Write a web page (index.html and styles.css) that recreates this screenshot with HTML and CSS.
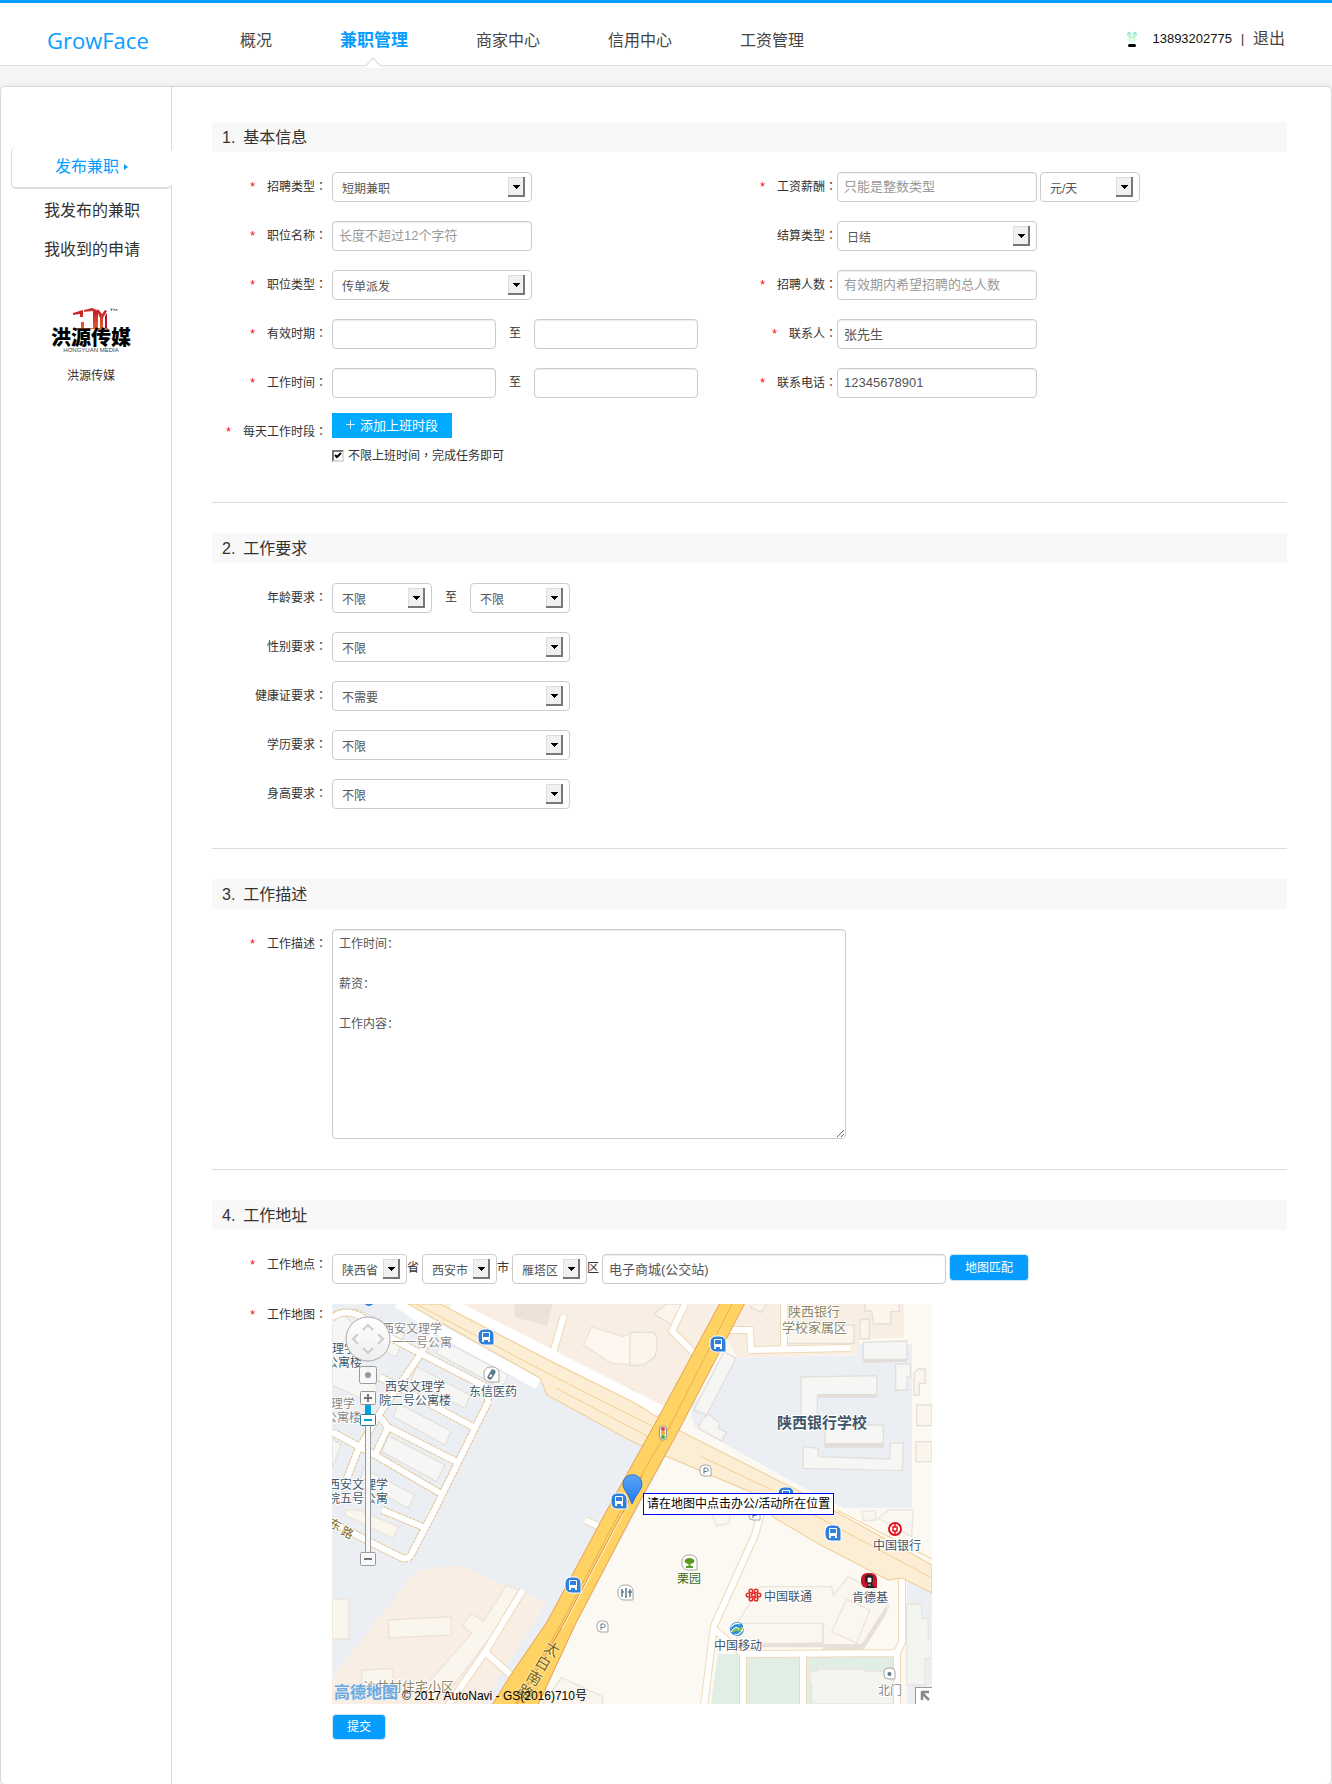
FILE: index.html
```html
<!DOCTYPE html>
<html lang="zh-CN">
<head>
<meta charset="utf-8">
<title>GrowFace</title>
<link rel="stylesheet" href="styles.css">
</head>
<body>
<header class="topbar">
  <a class="brand" href="#">GrowFace</a>
  <nav class="nav">
    <a href="#">概况</a>
    <a href="#" class="is-active">兼职管理<svg class="nav-tip" width="18" height="11" viewBox="0 0 18 11" aria-hidden="true"><path d="M0 11L9 1l9 10z" fill="#fff"/><path d="M2 8.500L9 .8l7 7.700" fill="none" stroke="#ddd" stroke-width="1.200"/></svg></a>
    <a href="#">商家中心</a>
    <a href="#">信用中心</a>
    <a href="#">工资管理</a>
  </nav>
  <div class="account">
    <svg class="avatar" width="12" height="17" viewBox="0 0 12 17" aria-hidden="true"><ellipse cx="6" cy="7" rx="4.500" ry="4.500" fill="#dffbe6"/><path d="M2 5Q1 1 3 1q2 1 1 3M10 5q1-4-1-4-2 1-1 3" fill="#bff5e4" stroke="#7fe0cf"/><path d="M4 5.500v1M8 5.500v1" stroke="#3a6"/><rect x="2" y="13" width="8" height="3" rx="1.500"/></svg>
    <span class="phone">13893202775</span><span class="bar">|</span><a href="#">退出</a>
  </div>
</header>

<div class="panel">
  <aside class="side">
    <a class="side-link is-active" href="#">发布兼职<svg width="4" height="6" viewBox="0 0 4 6" aria-hidden="true"><path d="M0 0l4 3-4 3z" fill="#069dff"/></svg></a>
    <a class="side-link" href="#">我发布的兼职</a>
    <a class="side-link" href="#">我收到的申请</a>
    <div class="company">
      <svg width="94" height="46" viewBox="0 0 94 46" role="img" aria-label="洪源传媒">
        <defs><linearGradient id="red" x1="0" y1="0" x2="0" y2="1"><stop offset="0" stop-color="#c21a2a"/><stop offset="1" stop-color="#e8632a"/></linearGradient></defs>
        <path d="M29 6l10-3v7h-3V7l-7 1zM37 15h3v7h-3z" fill="url(#red)"/>
        <path d="M40 3l8-2 5 2v4l-4-3-9 1z" fill="url(#red)"/>
        <path d="M49 4h5v18h-5z" fill="url(#red)"/>
        <path d="M54 2l4 5 3-4 2 1-4 7v11h-3V11l-3-7z" fill="url(#red)"/>
        <path d="M61 9l2-3v16h-2z" fill="#b41428"/>
        <path d="M30 21h34v1H30z" fill="#e8632a"/>
        <path d="M66 2h3M67.500 2v2M70 4V2l1.500 1L73 2v2" stroke="#333" stroke-width=".6" fill="none"/>
        <text x="47" y="38" class="logo-cn">洪源传媒</text>
        <text x="47" y="45" class="logo-en">HONGYUAN MEDIA</text>
      </svg>
      <span>洪源传媒</span>
    </div>
  </aside>

  <form class="content">
    <section class="section">
      <h2><span>1.</span>基本信息</h2>
      <div class="columns">
        <div class="rows">
          <div class="field"><label for="kind"><i>*</i>招聘类型<span lang="zh-TW">：</span></label><select id="kind" class="w-200"><option>短期兼职</option></select></div>
          <div class="field"><label for="title"><i>*</i>职位名称<span lang="zh-TW">：</span></label><input id="title" class="w-200" type="text" placeholder="长度不超过12个字符"></div>
          <div class="field"><label for="jobtype"><i>*</i>职位类型<span lang="zh-TW">：</span></label><select id="jobtype" class="w-200"><option>传单派发</option></select></div>
          <div class="field"><label for="valid1"><i>*</i>有效时期<span lang="zh-TW">：</span></label><input id="valid1" class="w-date" type="text"><span class="to">至</span><input class="w-date" type="text" aria-label="有效时期结束"></div>
          <div class="field"><label for="work1"><i>*</i>工作时间<span lang="zh-TW">：</span></label><input id="work1" class="w-date" type="text"><span class="to">至</span><input class="w-date" type="text" aria-label="工作时间结束"></div>
        </div>
        <div class="rows rows-right">
          <div class="field"><label for="pay"><i>*</i>工资薪酬<span lang="zh-TW">：</span></label><input id="pay" class="w-200" type="text" placeholder="只能是整数类型"><select class="w-100 unit" aria-label="单位"><option>元/天</option></select></div>
          <div class="field"><label for="settle">结算类型<span lang="zh-TW">：</span></label><select id="settle" class="w-200"><option>日结</option></select></div>
          <div class="field"><label for="count"><i>*</i>招聘人数<span lang="zh-TW">：</span></label><input id="count" class="w-200" type="text" placeholder="有效期内希望招聘的总人数"></div>
          <div class="field"><label for="contact"><i>*</i>联系人<span lang="zh-TW">：</span></label><input id="contact" class="w-200" type="text" value="张先生"></div>
          <div class="field"><label for="tel"><i>*</i>联系电话<span lang="zh-TW">：</span></label><input id="tel" class="w-200" type="text" value="12345678901"></div>
        </div>
      </div>
      <div class="field field-slots">
        <label for="addslot"><i>*</i>每天工作时段<span lang="zh-TW">：</span></label>
        <div class="slots">
          <button type="button" id="addslot" class="btn-add"><svg width="11" height="11" viewBox="0 0 11 11" aria-hidden="true"><path d="M5.500 0v11M0 5.500h11" stroke="#fff"/></svg>添加上班时段</button>
          <label class="check"><input type="checkbox" checked><span>不限上班时间<span lang="zh-TW">，</span>完成任务即可</span></label>
        </div>
      </div>
    </section>

    <section class="section">
      <h2><span>2.</span>工作要求</h2>
      <div class="rows">
        <div class="field"><label for="age1">年龄要求<span lang="zh-TW">：</span></label><select id="age1" class="w-100"><option>不限</option></select><span class="to">至</span><select class="w-100" aria-label="年龄上限"><option>不限</option></select></div>
        <div class="field"><label for="sex">性别要求<span lang="zh-TW">：</span></label><select id="sex" class="w-238"><option>不限</option></select></div>
        <div class="field"><label for="health">健康证要求<span lang="zh-TW">：</span></label><select id="health" class="w-238"><option>不需要</option></select></div>
        <div class="field"><label for="edu">学历要求<span lang="zh-TW">：</span></label><select id="edu" class="w-238"><option>不限</option></select></div>
        <div class="field"><label for="height">身高要求<span lang="zh-TW">：</span></label><select id="height" class="w-238"><option>不限</option></select></div>
      </div>
    </section>

    <section class="section section-desc">
      <h2><span>3.</span>工作描述</h2>
      <div class="field"><label for="desc"><i>*</i>工作描述<span lang="zh-TW">：</span></label><textarea id="desc">工作时间：

薪资：

工作内容：</textarea></div>
    </section>

    <section class="section section-place">
      <h2><span>4.</span>工作地址</h2>
      <div class="rows">
        <div class="field"><label for="prov"><i>*</i>工作地点<span lang="zh-TW">：</span></label>
          <div class="place">
            <select id="prov" class="w-75"><option>陕西省</option></select><span>省</span>
            <select class="w-75" aria-label="市"><option>西安市</option></select><span>市</span>
            <select class="w-75" aria-label="区"><option>雁塔区</option></select><span>区</span>
            <input type="text" class="w-addr" aria-label="详细地址" value="电子商城(公交站)">
            <button type="button" class="btn btn-match">地图匹配</button>
          </div>
        </div>
        <div class="field"><label for="map"><i>*</i>工作地图<span lang="zh-TW">：</span></label>
          <div class="map" id="map">
            <svg class="map-art" viewBox="0 0 600 400" aria-label="地图">
              <defs>
                <linearGradient id="pin" x1="0" y1="0" x2="0" y2="1"><stop offset="0" stop-color="#5da4f8"/><stop offset="1" stop-color="#1f7cf0"/></linearGradient>
                <linearGradient id="disc" x1="0" y1="0" x2="0" y2="1"><stop offset="0" stop-color="#fff"/><stop offset="1" stop-color="#eee"/></linearGradient>
                <g id="bus"><path d="M0 6a6 6 0 0 1 6-6h4a6 6 0 0 1 6 6v10H6a6 6 0 0 1-6-6z" fill="#2f7fdb" stroke="#fff"/><rect x="4" y="3" width="8" height="8" rx="1" fill="#fff"/><rect x="5" y="4" width="6" height="4" fill="#2f7fdb"/><path d="M4 12h2M10 12h2" stroke="#fff" stroke-width="2"/></g>
                <g id="park"><path d="M0 4a4 4 0 0 1 4-4h3a4 4 0 0 1 4 4v7H4a4 4 0 0 1-4-4z" fill="#fff" stroke="#aaa7a2"/><path d="M4 9V3h2.500a1.500 1.500 0 0 1 0 3.500H4" fill="none" stroke="#5b7a8c"/></g>
                <path id="poi" d="M0 6a6 6 0 0 1 6-6h3a6 6 0 0 1 6 6v9H6a6 6 0 0 1-6-6z" fill="#fff" stroke="#aaa7a2"/>
              </defs>
              <rect width="600" height="400" fill="#ebeff4"/>
              <!-- east side ground -->
              <path d="M400 0H600V400H206L243 321 330 160 360 90z" fill="#fcf9f2"/>
              <path d="M80 0H395L325 120 215 60 108 0z" fill="#f8eee3"/>
              <path d="M412 0H572V34H527V50L405 54 395 34z" fill="#f8eee3"/>
              <path d="M405 54L526 51V40H580V204H511L461 178 364 124Q356 110 362 98z" fill="#ebeff4"/>
              <path d="M0 373L83 268Q106 261 130 262L173 281 215 298 150 400H0z" fill="#f8eee3"/>
              <path d="M575 270L600 285V400H575z" fill="#ebeff4"/>
              <path d="M386 350H565V400H379z" fill="#e1eee4"/>

              <!-- housing blocks -->
              <g transform="translate(-7 -9) scale(.3333)" fill="#f6f7f4" stroke="#e4e1dd" stroke-width="4">
                <path d="M350 135L550 240 530 280 335 175zM275 215L435 300 420 340 258 255zM220 325L378 408 360 450 205 365zM190 422L360 510 335 560 170 470zM115 520L270 600 250 640 105 560zM90 40L240 110 215 185 150 160zM21 60L60 60 95 100 70 165 21 140zM21 195L100 200 160 280 130 320 21 270zM21 430L48 450 21 520z"/>
                <g fill="#fdf7ef" stroke="#ece2d8"><path d="M570 27H680L665 90 570 65z" fill="#ece2da"/><path d="M800 95L895 125 930 110V210L860 205 775 150z"/></g>
              </g>
              <g transform="translate(298 -9) scale(.3333)" fill="#f6f7f4" stroke="#e4dfda" stroke-width="4">
                <path d="M282 170L318 190 230 360 192 345zM235 357L270 385 265 400 290 412 275 438 205 400 215 375z"/>
                <path d="M513 246L740 242V306H562V366H513zM585 390H760V455H585zM520 455L565 460V485L780 492V445L820 443 817 527 520 520z"/>
                <path d="M562 297H738V307H562zM585 444H760V458H585zM700 192L831 188V200L700 204z" fill="#e2ddd9" stroke="none"/>
                <path d="M700 142L831 138V193L700 193zM797 207H841V245H831V285H797z"/>
                <g fill="#fcf5ec"><path d="M110 27L72 57 130 92 160 27zM360 35L395 52 410 27M705 27V48H725L730 87H782V50H808V27M690 75L718 72V132H690zM472 90H672V145H472zM852 235L865 222H886V265H868V300H852zM860 330H906V392H860zM858 440H906V500H858zM0 112H70Q90 130 75 185L40 210 0 212z"/></g>
              </g>
              <g transform="translate(-7 206) scale(.3333)" fill="#faf6ee" stroke="#ece3da" stroke-width="4">
                <path d="M190 330L378 320V375L192 384zM545 225L580 240 520 350 390 520 320 575 290 540 440 370 412 345 440 310 475 335zM110 480L205 476V520H110zM60 0L100 0 220 50 205 85 60 15zM21 265L72 270V387H21zM710 503L833 560V600H640z"/>
              </g>
              <g transform="translate(298 206) scale(.3333)" fill="#fbf6ef" stroke="#ece4de" stroke-width="4">
                <path d="M325 335L390 230H605L610 255 655 200 770 260 775 290 700 418 580 420V340H325zM320 340H578V400H320z"/>
                <path d="M318 405L578 397V412H330zM583 402H695L770 285V310L700 420H583z" fill="#e8dfda" stroke="none"/>
                <path d="M650 268L720 300 680 400 605 365zM697 5L735 2 740 30 700 32zM775 0H850L845 80 745 25zM240 0H300L298 40 260 48z"/>
                <path d="M545 485H560V478H705V485H790V582H545V520H540V490zM830 282H875V325H895V385H906V445H885V525H830z" fill="#f3f5f1"/>
              </g>

              <!-- estate lanes: dashed edge, white bed -->
              <g fill="none" stroke-linejoin="round">
                <path stroke="#e3c18c" stroke-width="8" stroke-dasharray="3 1" d="M103 24L88 51 48 109 26 146 12 182M55 32L88 49 156 84V98L100 211 80 249 Q77 256 70 254L40 239 0 218M48 73L141 123M46 111L56 123 125 158M0 128L43 151 108 189M56 123L43 151M50 206L91 223M0 14Q12 4 28 12L60 34"/>
                <path stroke="#fff" stroke-width="6" d="M103 24L88 51 48 109 26 146 12 182M55 32L88 49 156 84V98L100 211 80 249 Q77 256 70 254L40 239 0 218M48 73L141 123M46 111L56 123 125 158M0 128L43 151 108 189M56 123L43 151M50 206L91 223M0 14Q12 4 28 12L60 34"/>
                <path stroke="#efd9b8" stroke-width="8" d="M191 286L153 348 116 402M153 348L181 373M232 11L219 56M353 0L340 27 363 50M395 26H418L419 46 518 44M452 0V44M430 205L423 231 382 322 372 402M382 325L411 350 565 349 570 338V274M411 350V402M471 350V402M565 345V402M253 216L266 222M296 87L311 98 325 116"/>
                <path stroke="#fff" stroke-width="6" d="M191 286L153 348 116 402M153 348L181 373M232 11L219 56M353 0L340 27 363 50M395 26H418L419 46 518 44M452 0V44M430 205L423 231 382 322 372 402M382 325L411 350 565 349 570 338V274M411 350V402M471 350V402M565 345V402M253 216L266 222M296 87L311 98 325 116"/>
              </g>

              <!-- avenue running north-west to south-east -->
              <path d="M120 0L220 51 330 107" fill="none" stroke="#fff" stroke-width="10"/>
              <path d="M66 -2L100 22 206 80" fill="none" stroke="#fff" stroke-width="11"/>
              <path d="M76 0H108L220 58 303 99 346 126 461 184 501 206 600 261V289L570 274 556 276 485 239 441 213 421 189 303 139 215 91 208 74z" fill="#fbeed4" stroke="#f0c98c"/>
              <path d="M84 0L215 69 320 122M224 84L330 140M368 152L440 186M480 210L600 274M505 206L600 255" fill="none" stroke="#f4cf8e"/>
              <!-- main road -->
              <path d="M388 -1H413L348 124 303 206 243 321 206 401H160L180 369 215 318 275 206 325 116z" fill="#ffd264" stroke="#e5a052"/>
              <path d="M400 0L338 122 289 206 229 320 183 400" fill="none" stroke="#e8b04e"/>
              <path d="M310 172L291 208 231 321 185 400" fill="none" stroke="#d98c48"/>
              <path d="M291 210L230 325" fill="none" stroke="#fff3da"/>

              <!-- points of interest -->
              <use href="#bus" x="146" y="25"/><use href="#bus" x="378" y="32"/><use href="#bus" x="446" y="183"/><use href="#bus" x="493" y="221"/><use href="#bus" x="279" y="189"/><use href="#bus" x="233" y="273"/>
              <circle cx="37" cy="-3" r="5" fill="#2f7fdb"/>
              <use href="#park" x="368" y="161"/><use href="#park" x="417" y="205"/><use href="#park" x="265" y="317"/>
              <use href="#poi" x="152" y="63"/><path d="M158 73l3-5" stroke="#5b7a8c" stroke-width="5" stroke-linecap="round"/><path d="M158 73l1.500-2.500" stroke="#fff" stroke-width="2"/>
              <use href="#poi" x="286" y="281"/><path d="M290 285v8M294 284v10M298 285v8M289 288h3M296 288h4" stroke="#5b7a8c" stroke-width="1.500"/>
              <use href="#poi" x="350" y="251"/><path d="M357.500 255v8M354 263h7" stroke="#5a9a20" stroke-width="2"/><ellipse cx="357.500" cy="257" rx="5" ry="3" fill="#5a9a20"/>
              <path d="M552 368a4 4 0 0 1 4-4h3a4 4 0 0 1 4 4v7h-7a4 4 0 0 1-4-4z" fill="#fff" stroke="#aaa7a2"/><circle cx="557.500" cy="370" r="2" fill="#5b7a8c"/>
              <rect x="327.500" y="122" width="7" height="14" rx="3" fill="#eee" stroke="#999"/><circle cx="331" cy="125" r="2" fill="#e8403a"/><circle cx="331" cy="129" r="2" fill="#f5a623"/><circle cx="331" cy="133" r="2" fill="#4caf28"/>
              <g fill="#fff" stroke="#e0101e" stroke-width="2"><circle cx="563" cy="225" r="6"/><rect x="561" y="223" width="4" height="4" stroke-width="1.500"/><path d="M563 219v4M563 227v4" stroke-width="1.500"/></g>
              <path d="M529 275a6 6 0 0 1 6-6h4a6 6 0 0 1 6 6v9h-10a6 6 0 0 1-6-6z" fill="#c8142c"/><path d="M533 272q4-3 8 0v5l-1 3 3 4h-9l2-4-3-3z" fill="#222"/><path d="M536 274h3v4h-3zM536 281h3" stroke="#fff" stroke-width=".8" fill="#fff"/>
              <g fill="none" stroke="#e0302a" stroke-width="1.500"><circle cx="416" cy="291" r="1.800"/><circle cx="419" cy="287" r="1.800"/><circle cx="419" cy="295" r="1.800"/><circle cx="424" cy="287" r="1.800"/><circle cx="424" cy="295" r="1.800"/><circle cx="421.500" cy="291" r="1.800"/><circle cx="427" cy="291" r="1.800"/></g>
              <circle cx="405" cy="325" r="7" fill="#2f8fd8"/><path d="M399 328q5-7 8-3t5-3M399 323q4-5 9-3M402 331q5 0 9-5" fill="none" stroke="#fff" stroke-width="1.200"/><path d="M401 328q3-4 5-2t4-3" fill="none" stroke="#8cc63f" stroke-width="2"/>

              <g class="map-text">
                <g class="faint"><text x="50" y="29">西安文理学</text><text x="60" y="43">一一号公寓</text><text x="-1" y="104">理学</text><text x="-7" y="118">公寓楼</text><text x="546" y="391">北门</text></g>
                <text x="0" y="49">理学</text><text x="-6" y="63">公寓楼</text>
                <text x="53" y="87">西安文理学</text><text x="47" y="101">院二号公寓楼</text>
                <text x="137" y="92">东信医药</text>
                <text x="-4" y="185">西安文理学</text><text x="-4" y="199">院五号公寓</text>
                <text x="541" y="246">中国银行</text><text x="432" y="297">中国联通</text><text x="520" y="298">肯德基</text><text x="382" y="346">中国移动</text>
                <text x="345" y="279" class="green">栗园</text>
                <g class="area"><text x="456" y="12">陕西银行</text><text x="450" y="28">学校家属区</text><text x="31" y="387">沙井村住宅小区</text></g>
                <text x="445" y="124" class="school">陕西银行学校</text>
                <g class="road"><text x="211 202 193 184" y="346 360 375 389" rotate="30">太白南路</text><text class="lane" x="-4 8" y="222 230" rotate="26">东路</text></g>
              </g>

              <!-- pan and zoom control -->
              <circle cx="36" cy="35" r="22" fill="url(#disc)" stroke="#aaa"/>
              <path d="M31 26l5-5 5 5M31 44l5 5 5-5M26 30l-5 5 5 5M46 30l5 5-5 5" fill="none" stroke="#ccc" stroke-width="2"/>
              <g fill="#f8f8f8" stroke="#999"><rect x="27.500" y="62.500" width="17" height="17" rx="2"/><rect x="33.500" y="95" width="5" height="160"/><rect x="28.500" y="87.500" width="15" height="13" rx="1"/><rect x="28.500" y="248.500" width="15" height="13" rx="1"/></g>
              <circle cx="36" cy="71" r="3" fill="#999"/>
              <rect x="33" y="101" width="6" height="10" fill="#00a2dd"/><rect x="28.500" y="110.500" width="15" height="11" rx="1" fill="#fff" stroke="#277f9c"/>
              <path d="M32 116h8" stroke="#00a2dd" stroke-width="2"/><path d="M32 94h8M36 90v8M32 255h8" stroke="#777" stroke-width="2"/>

              <path d="M300 200Q298 193 293 186a9.500 9.500 0 1 1 15 0Q303 193 300 200z" fill="url(#pin)" stroke="#2672d8"/>
              <rect x="583.500" y="383.500" width="17" height="17" fill="#fff" stroke="#999"/><path d="M589 388h8M590 388v8M590 389l7 7" fill="none" stroke="#888" stroke-width="2.500"/>
              <text x="2" y="394" class="map-brand">高德地图</text>
              <text x="70" y="396" class="copyright">© 2017 AutoNavi - GS(2016)710号</text>
            </svg>
            <span class="map-tip">请在地图中点击办公/活动所在位置</span>
          </div>
        </div>
      </div>
      <button type="submit" class="btn btn-submit">提交</button>
    </section>
  </form>
</div>
</body>
</html>
```
FILE: styles.css
```css
* { box-sizing: border-box; }
body {
  margin: 0;
  background: #f5f5f5;
  color: #333;
  font: 12px/20px "Liberation Sans", "Noto Sans CJK SC", sans-serif;
}
a { color: inherit; text-decoration: none; }
i { font-style: normal; }
svg { display: block; }
input, select, textarea, button { margin: 0; font-family: inherit; }

.topbar {
  display: flex;
  align-items: center;
  height: 66px;
  padding: 14px 47px 0;
  border-top: 3px solid #069dff;
  border-bottom: 1px solid #ddd;
  background: #fff;
}
.brand { width: 193px; padding-bottom: 2px; color: #069dff; font: 22px/30px "Open Sans", "Noto Sans", sans-serif; }
.nav { display: flex; align-items: center; gap: 68px; font-size: 16px; color: #444; line-height: 26px; }
.nav a { position: relative; }
.nav .is-active { color: #069dff; font-size: 17px; font-weight: bold; }
.nav-tip { position: absolute; left: 24px; top: 29px; }
.account { display: flex; align-items: center; margin-left: auto; padding-bottom: 4px; }
.avatar { margin-right: 14px; }
.phone { font-size: 13px; color: #111; }
.bar { width: 21px; text-align: center; color: #111; }
.account a { font-size: 16px; color: #444; }

.panel {
  display: flex;
  margin-top: 20px;
  border: 1px solid #d8d8d8;
  border-radius: 5px;
  background: #fff;
  box-shadow: 0 0 4px #e4e4e4;
}
.side {
  flex: none;
  display: flex;
  flex-direction: column;
  width: 171px;
  padding: 60px 0 0 10px;
  border-right: 1px solid #d8d8d8;
}
.side-link { height: 39px; line-height: 40px; padding-left: 33px; font-size: 16px; }
.side-link.is-active {
  display: flex;
  align-items: center;
  gap: 5px;
  height: 42px;
  margin: 0 -1px 2px 0;
  padding-left: 43px;
  border: 1px solid #ddd;
  border-width: 0 0 2px 1px;
  border-radius: 5px;
  background: #fff;
  color: #069dff;
}
.company { display: flex; flex-direction: column; align-items: center; gap: 13px; margin-top: 38px; }
.logo-cn { font-size: 20px; font-weight: 900; text-anchor: middle; fill: #000; }
.logo-en { font-size: 6px; text-anchor: middle; fill: #444; }

.content { flex: 1; min-width: 0; padding: 35px 44px 44px 40px; }
.section + .section { margin-top: 39px; padding-top: 30px; border-top: 1px solid #ddd; }
.section-desc + .section-place { margin-top: 30px; }
h2 {
  display: flex;
  gap: 8px;
  height: 30px;
  margin: 0 0 20px;
  padding-left: 10px;
  background: #f8f8f8;
  font-size: 16px;
  font-weight: normal;
  line-height: 32px;
}
.columns { display: grid; grid-template-columns: 505px 1fr; }
.rows { display: flex; flex-direction: column; gap: 19px; }
.field { display: flex; align-items: flex-start; }
.field > label { flex: none; width: 120px; height: 30px; padding-right: 5px; line-height: 30px; text-align: right; white-space: nowrap; }
.field > label i { margin-right: 12px; color: #f00; }
.rows-right .field > label { padding-right: 0; }
.to { width: 38px; line-height: 28px; text-align: center; }

input[type="text"], select, textarea {
  height: 30px;
  border: 1px solid #ccc;
  border-radius: 4px;
  background: #fff;
  color: #555;
}
input[type="text"] { padding: 0 6px 1px; font-size: 13px; box-shadow: inset 0 1px 1px #eee; }
input::placeholder { color: #999; opacity: 1; }
select {
  appearance: none;
  padding: 3px 26px 0 9px;
  font-size: 12px;
  background: #fff url("data:image/svg+xml,%3Csvg xmlns='http://www.w3.org/2000/svg' width='17' height='20'%3E%3Cpath fill='%23f0f0f0' d='M0 0h17v20H0z'/%3E%3Cpath fill='none' stroke='%23ddd' d='M.5 20V.5H17'/%3E%3Cpath fill='none' stroke='%23777' stroke-width='2' d='M0 19h16V0'/%3E%3Cpath d='M5 8h7v1H5zM6 9h5v1H6zM7 10h3v1H7zM8 11h1v1H8z'/%3E%3C/svg%3E") no-repeat right 6px top 4px;
}
.w-200 { width: 200px; }
.w-date { width: 164px; }
.w-100 { width: 100px; }
.w-238 { width: 238px; }
.w-75 { width: 75px; padding-right: 24px; }
.w-addr { width: 344px; }
.unit { margin-left: 3px; }
textarea {
  width: 514px;
  height: 210px;
  padding: 4px 6px;
  font-size: 12px;
  line-height: 20px;
  box-shadow: inset 0 1px 1px #eee;
}

.field-slots { margin-top: 15px; }
.field-slots > label { padding-top: 4px; }
.slots { display: flex; flex-direction: column; align-items: flex-start; gap: 11px; }
.btn-add {
  display: flex;
  align-items: center;
  gap: 5px;
  width: 120px;
  height: 25px;
  padding: 0 14px 2px;
  border: 0;
  background: #00aaff;
  color: #fff;
  font-size: 13px;
  white-space: nowrap;
}
.check { display: flex; align-items: center; gap: 4px; height: 14px; }
.check input {
  appearance: none;
  width: 12px;
  height: 12px;
  border: 2px solid;
  border-color: #777 #ddd #ddd #777;
  background: url("data:image/svg+xml,%3Csvg xmlns='http://www.w3.org/2000/svg' width='8' height='8'%3E%3Cpath fill='none' stroke='%23000' stroke-width='2' d='M1 3l2 2 4-4'/%3E%3C/svg%3E") no-repeat center;
}

.section-place h2 { margin-bottom: 24px; }
.section-place .rows { gap: 20px; }
.section-place .field > label { height: 20px; line-height: 22px; }
.place { display: flex; }
.place span { width: 15px; line-height: 28px; }
.btn {
  border: 1px solid #cde4f5;
  border-radius: 4px;
  background: #069dff;
  color: #fff;
  font-size: 12px;
  line-height: 20px;
  padding: 0;
}
.btn-match { width: 80px; height: 27px; margin-left: 3px; }
.btn-submit { display: block; width: 54px; height: 26px; margin: 10px 0 0 120px; }

.map { position: relative; width: 600px; overflow: hidden; }
.map-art { width: 100%; }
.map-tip {
  position: absolute;
  left: 311px;
  top: 189px;
  height: 22px;
  padding: 0 3px;
  border: 1px solid #00f;
  background: #fff;
  color: #000;
  white-space: nowrap;
}
.map-text { font-size: 12px; fill: #3f5668; stroke: #fff; stroke-width: 2px; stroke-linejoin: round; paint-order: stroke; }
.map-text .faint { fill: #888; }
.map-text .green { fill: #3f6a10; }
.map-text .area { font-size: 13px; fill: #8d8568; }
.map-text .school { font-size: 15px; font-weight: bold; }
.map-text .road { font-size: 15px; fill: #7d6420; stroke: #ffe9a0; }
.map-text .lane { font-size: 12px; stroke: #fff; }
.map-brand { font-size: 16px; font-weight: bold; fill: #6fa9dc; stroke: #e4eff9; stroke-width: 1px; paint-order: stroke; }
.copyright { font-size: 12px; fill: #000; }
```
